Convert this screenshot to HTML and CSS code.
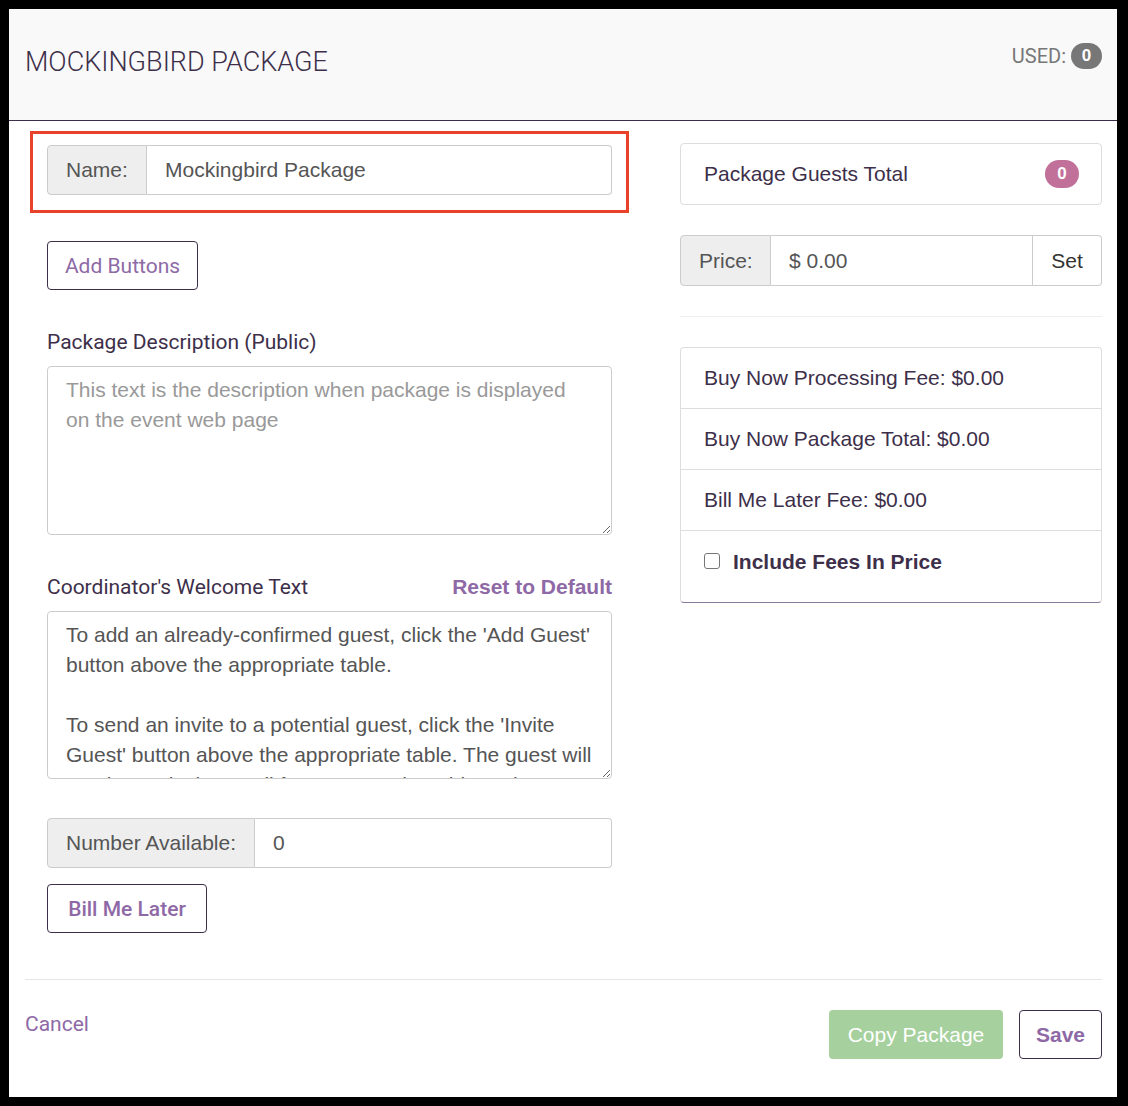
FILE: index.html
```html
<!DOCTYPE html>
<html lang="en">
  <head>
    <meta charset="UTF-8" />
    <meta name="viewport" content="width=device-width, initial-scale=1.0" />
    <title>Mockingbird Package</title>

    <link rel="stylesheet" href="styles.css">
  </head>
  <body>
    <div class="modal">
      <div class="modal-header">
        <h4 class="modal-title">MOCKINGBIRD PACKAGE</h4>
        <div class="used">USED: <span class="badge badge-grey">0</span></div>
      </div>

      <div class="modal-body">
        <div class="col-left">
          <div class="highlight">
            <div class="input-group">
              <span class="addon addon-name">Name:</span>
              <input class="field" type="text" value="Mockingbird Package" />
            </div>
          </div>

          <button class="btn btn-outline btn-add">Add Buttons</button>

          <label class="label label-desc">Package Description (Public)</label>
          <textarea class="text-box text-desc" placeholder="This text is the description when package is displayed on the event web page"></textarea>

          <div class="label-row">
            <label class="label">Coordinator's Welcome Text</label>
            <a class="reset-link" href="#">Reset to Default</a>
          </div>
          <textarea class="text-box text-welcome">To add an already-confirmed guest, click the 'Add Guest' button above the appropriate table.

To send an invite to a potential guest, click the 'Invite Guest' button above the appropriate table. The guest will receive an invite email for a seat at the table and can accept it.</textarea>

          <div class="input-group group-number">
            <span class="addon addon-number">Number Available:</span>
            <input class="field" type="text" value="0" />
          </div>

          <button class="btn btn-outline btn-bill">Bill Me Later</button>
        </div>

        <div class="col-right">
          <div class="panel guests">
            <span>Package Guests Total</span>
            <span class="badge badge-pink">0</span>
          </div>

          <div class="input-group group-price">
            <span class="addon addon-price">Price:</span>
            <input class="field" type="text" value="$ 0.00" />
            <button class="btn-set">Set</button>
          </div>

          <hr class="divider" />

          <ul class="list-group">
            <li>Buy Now Processing Fee: $0.00</li>
            <li>Buy Now Package Total: $0.00</li>
            <li>Bill Me Later Fee: $0.00</li>
            <li class="check-item">
              <input type="checkbox" class="check" id="include-fees" />
              <label for="include-fees">Include Fees In Price</label>
            </li>
          </ul>
        </div>
      </div>

      <div class="modal-footer">
        <a class="cancel" href="#">Cancel</a>
        <div class="actions">
          <button class="btn btn-copy">Copy Package</button>
          <button class="btn btn-outline btn-save">Save</button>
        </div>
      </div>
    </div>
  </body>
</html>
```

FILE: styles.css
```css
body {
  margin: 0;
  background: #000;
  font-family: Roboto, "Liberation Sans", sans-serif;
  color: #3d2f4a;
}

.modal {
  width: 1108px;
  height: 1088px;
  margin: 9px 11px 9px 9px;
  background: #fff;
}

.modal-header {
  height: 111px;
  background: #f9f9f9;
  border-bottom: 1px solid #3d2e4a;
  display: flex;
  justify-content: space-between;
  align-items: flex-start;
  padding: 0 15px 0 16px;
}

.modal-title {
  margin: 0;
  padding-top: 36px;
  font-size: 27px;
  font-weight: 300;
  line-height: 34px;
  color: #3d2f4a;
}

.used {
  padding-top: 33px;
  font-size: 20px;
  line-height: 28px;
  color: #777;
  display: flex;
  align-items: center;
  gap: 5px;
}

.badge {
  display: inline-flex;
  align-items: center;
  justify-content: center;
  min-width: 31px;
  height: 26px;
  border-radius: 13px;
  color: #fff;
  font-family: "Liberation Sans", sans-serif;
  font-weight: bold;
  font-size: 17px;
}

.badge-grey {
  background: #777;
}

.badge-pink {
  background: #c17099;
  min-width: 34px;
  height: 28px;
  border-radius: 14px;
}

.modal-body {
  display: flex;
  gap: 68px;
  padding: 10px 15px 46px 38px;
}

.col-left {
  width: 565px;
  display: flex;
  flex-direction: column;
  align-items: flex-start;
}

.col-right {
  width: 422px;
  padding-top: 12px;
}

/* red outline round the name field */
.highlight {
  margin-left: -17px;
  padding: 11px 14px 15px;
  border: 3px solid #e8432a;
}

.input-group {
  display: flex;
  width: 565px;
  height: 50px;
  font-family: "Liberation Sans", sans-serif;
  font-size: 21px;
}

.addon {
  display: flex;
  align-items: center;
  padding: 0 18px;
  background: #eee;
  border: 1px solid #ccc;
  border-radius: 4px 0 0 4px;
  color: #555;
  white-space: nowrap;
  box-sizing: border-box;
}

.addon-name {
  width: 100px;
}

.addon-number {
  width: 208px;
  padding-right: 0;
}

.addon-price {
  width: 91px;
}

.field {
  flex: 1;
  min-width: 0;
  border: 1px solid #ccc;
  border-left: 0;
  border-radius: 0 4px 4px 0;
  padding: 0 18px;
  font: inherit;
  color: #555;
  outline: none;
}

.btn {
  height: 49px;
  padding: 0 10px;
  border-radius: 4px;
  font-size: 21px;
  background: #fff;
  cursor: pointer;
}

.btn-outline {
  border: 1px solid #3d2e4a;
  color: #8e69a6;
  font-family: Roboto, sans-serif;
}

.btn-add {
  margin-top: 28px;
  width: 151px;
}

.btn-bill {
  margin-top: 16px;
  width: 160px;
  font-weight: 500;
}

.label {
  display: block;
  font-size: 21px;
  line-height: 24px;
  color: #3d2f4a;
}

.label-desc {
  margin-top: 40px;
}

.label-row {
  width: 565px;
  margin-top: 40px;
  display: flex;
  justify-content: space-between;
  align-items: center;
}

.reset-link {
  color: #8e69a6;
  font-family: "Liberation Sans", sans-serif;
  font-weight: bold;
  font-size: 21px;
  text-decoration: none;
}

.text-box {
  margin-top: 12px;
  width: 565px;
  box-sizing: border-box;
  padding: 8px 18px 10px;
  border: 1px solid #ccc;
  border-radius: 4px;
  font-family: "Liberation Sans", sans-serif;
  font-size: 21px;
  line-height: 30px;
  color: #555;
  resize: vertical;
  overflow: hidden;
  outline: none;
}

.text-box::placeholder {
  color: #999;
}

.text-desc {
  height: 169px;
}

.text-welcome {
  height: 168px;
}

.group-number {
  margin-top: 39px;
}

.panel {
  border: 1px solid #ddd;
  border-radius: 4px;
}

.guests {
  height: 62px;
  box-sizing: border-box;
  display: flex;
  justify-content: space-between;
  align-items: center;
  padding: 0 22px 0 23px;
  font-family: "Liberation Sans", sans-serif;
  font-size: 21px;
}

.group-price {
  width: 422px;
  height: 51px;
  margin-top: 30px;
}

.group-price .field {
  border-radius: 0;
}

.btn-set {
  width: 69px;
  border: 1px solid #ccc;
  border-left: 0;
  border-radius: 0 4px 4px 0;
  background: #fff;
  font: inherit;
  color: #333;
}

.divider {
  margin: 30px 0 0;
  border: 0;
  border-top: 1px solid #eee;
}

.list-group {
  list-style: none;
  margin: 30px 0 0;
  padding: 0;
  border: 1px solid #ddd;
  border-bottom-color: #8c7a9c;
  border-radius: 4px;
  font-family: "Liberation Sans", sans-serif;
  font-size: 21px;
}

.list-group li {
  height: 60px;
  display: flex;
  align-items: center;
  padding: 0 22px 0 23px;
  border-top: 1px solid #ddd;
}

.list-group li:first-child {
  border-top: 0;
}

.list-group .check-item {
  height: 72px;
  align-items: flex-start;
  padding-top: 22px;
  box-sizing: border-box;
  gap: 13px;
}

.check {
  appearance: none;
  width: 16px;
  height: 16px;
  margin: 0;
  border: 1px solid #767676;
  border-radius: 3px;
  background: #fff;
}

.check-item label {
  font-weight: bold;
  line-height: 24px;
  margin-top: -3px;
}

.modal-footer {
  margin: 0 15px 0 16px;
  border-top: 1px solid #e5e5e5;
  padding-top: 30px;
  display: flex;
  justify-content: space-between;
  align-items: flex-start;
}

.cancel {
  font-size: 21px;
  line-height: 28px;
  color: #8e69a6;
  text-decoration: none;
}

.actions {
  display: flex;
  gap: 16px;
}

.btn-copy {
  width: 174px;
  border: 0;
  background: #a6d19e;
  color: #fff;
  font-family: "Liberation Sans", sans-serif;
}

.btn-save {
  width: 83px;
  font-family: "Liberation Sans", sans-serif;
  font-weight: bold;
}
```
